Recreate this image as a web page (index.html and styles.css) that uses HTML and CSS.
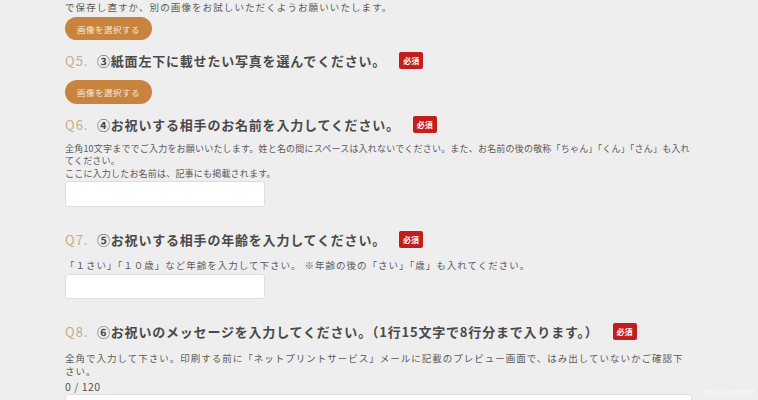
FILE: index.html
```html
<!DOCTYPE html>
<html lang="ja">
<head>
<meta charset="utf-8">
<title>フォーム</title>
<link rel="stylesheet" href="styles.css">
</head>
<body>
<div class="form">
  <p class="note top-note">で保存し直すか、別の画像をお試しいただくようお願いいたします。</p>
  <button class="btn btn-first" type="button">画像を選択する</button>

  <div class="q q5">
    <span class="qnum">Q5.</span>
    <span class="qtext">③紙面左下に載せたい写真を選んでください。</span>
    <span class="req">必須</span>
  </div>
  <button class="btn btn-second" type="button">画像を選択する</button>

  <div class="q q6">
    <span class="qnum">Q6.</span>
    <span class="qtext">④お祝いする相手のお名前を入力してください。</span>
    <span class="req">必須</span>
  </div>
  <p class="note tight">全角10文字まででご入力をお願いいたします。姓と名の間にスペースは入れないでください。また、お名前の後の敬称「ちゃん」「くん」「さん」も入れてください。<br>ここに入力したお名前は、記事にも掲載されます。</p>
  <input class="field field-name" type="text">

  <div class="q q7">
    <span class="qnum">Q7.</span>
    <span class="qtext">⑤お祝いする相手の年齢を入力してください。</span>
    <span class="req">必須</span>
  </div>
  <p class="note q7-note">「１さい」「１０歳」など年齢を入力して下さい。 ※年齢の後の「さい」「歳」も入れてください。</p>
  <input class="field field-age" type="text">

  <div class="q q8">
    <span class="qnum">Q8.</span>
    <span class="qtext">⑥お祝いのメッセージを入力してください。（1行15文字で8行分まで入ります。）</span>
    <span class="req">必須</span>
  </div>
  <p class="note q8-note">全角で入力して下さい。印刷する前に「ネットプリントサービス」メールに記載のプレビュー画面で、はみ出していないかご確認下さい。</p>
  <p class="count">0 / 120</p>
  <textarea class="area"></textarea>
</div>
<div class="watermark">macaroni</div>
</body>
</html>
```
FILE: styles.css
```css
html, body {
  margin: 0;
  padding: 0;
  background: #eeeeee;
  height: 400px;
  overflow: hidden;
}
body {
  font-family: "Noto Sans CJK JP", "Noto Sans", sans-serif;
  color: #555;
  position: relative;
}
.form {
  display: flex;
  flex-direction: column;
  align-items: flex-start;
  width: 627px;
  padding-left: 65px;
}
.note {
  margin: 0;
  font-size: 9.5px;
  line-height: 13px;
  letter-spacing: 1px;
  color: #5a5a5a;
}
.top-note {
  margin-top: 1px;
  letter-spacing: 1.1px;
}
.btn {
  border: 0;
  border-radius: 12px;
  background: #c8843f;
  color: #f7ead9;
  font-family: inherit;
  font-size: 8.5px;
  letter-spacing: 0.5px;
  width: 87px;
  height: 23px;
  padding: 0;
}
.btn-first { margin-top: 3px; }
.btn-second { margin-top: 10px; height: 24px; }
.q {
  display: flex;
  align-items: center;
  height: 20px;
  margin-top: 10px;
}
.q7, .q8 { margin-top: 23px; }
.qnum {
  color: #c9aa8a;
  font-size: 13px;
  letter-spacing: 1px;
  width: 32px;
}
.qtext {
  font-size: 13px;
  font-weight: bold;
  letter-spacing: 0.8px;
  color: #4a4a4a;
}
.req {
  margin-left: 13px;
  background: #c41d1d;
  color: #fff;
  font-size: 8px;
  font-weight: bold;
  border-radius: 2px;
  width: 24px;
  height: 17px;
  display: flex;
  align-items: center;
  justify-content: center;
}
.q8 .req { margin-left: 14px; }
.tight {
  font-size: 9px;
  letter-spacing: 0.2px;
  line-height: 12.5px;
  margin-top: 8.5px;
}
.field {
  box-sizing: border-box;
  width: 200px;
  background: #fff;
  border: 1px solid #dedede;
  border-radius: 3px;
  padding: 0;
}
.field-name { margin-top: 0.5px; height: 26px; }
.q7-note { margin-top: 9.5px; }
.field-age { margin-top: 1.5px; height: 25px; }
.q8-note { margin-top: 10.5px; }
.count {
  margin: 2px 0 0;
  font-size: 10.5px;
  line-height: 13px;
  letter-spacing: 0.5px;
  color: #555;
}
.area {
  box-sizing: border-box;
  margin-top: 0.5px;
  width: 627px;
  height: 80px;
  background: #fff;
  border: 1px solid #dedede;
  border-radius: 3px;
  resize: none;
}
.watermark {
  position: absolute;
  right: 2px;
  top: 384px;
  font-family: "Noto Sans", sans-serif;
  font-size: 11px;
  color: rgba(255, 255, 255, 0.6);
  letter-spacing: 0.5px;
}
```
